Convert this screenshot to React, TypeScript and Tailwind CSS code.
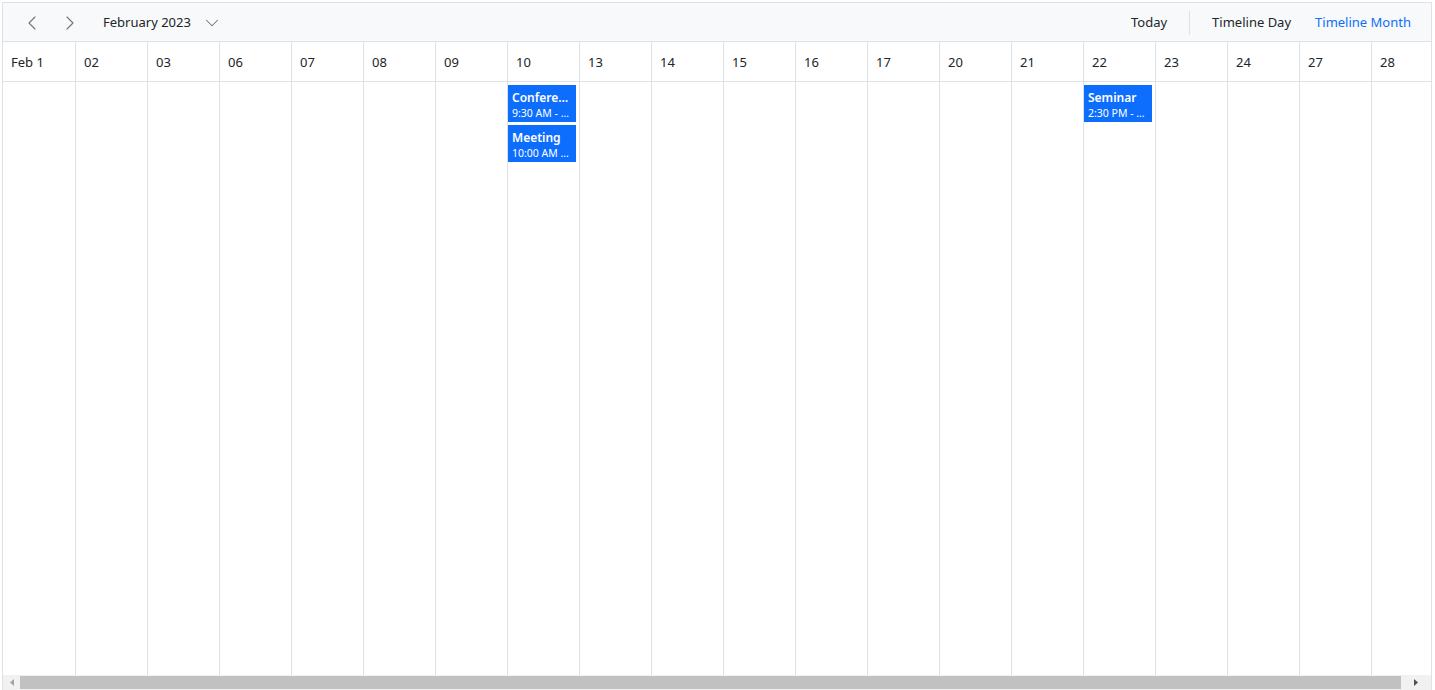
import { ChevronLeft, ChevronRight, ChevronDown } from "lucide-react";

const days = ["Feb 1", "02", "03", "06", "07", "08", "09", "10", "13", "14", "15", "16", "17", "20", "21", "22", "23", "24", "27", "28"];

const events: Record<string, { title: string; time: string }[]> = {
  "10": [
    { title: "Conference", time: "9:30 AM - 11:00 AM" },
    { title: "Meeting", time: "10:00 AM - 11:30 AM" },
  ],
  "22": [{ title: "Seminar", time: "2:30 PM - 4:00 PM" }],
};

export default function App() {
  return (
    <div className="h-[690px] pl-[2px] pt-[2px] bg-white overflow-hidden font-['Segoe_UI','Noto_Sans',sans-serif] text-[#212529]">
      <div className="w-[1430px] h-[689px] border border-[#dee2e6] flex flex-col overflow-hidden">
        {/* toolbar */}
        <div className="h-[39px] shrink-0 bg-[#f8f9fa] border-b border-[#dee2e6] flex items-center text-[13px] pt-[2px]">
          <button className="w-[38px] h-[38px] ml-[10px] flex items-center justify-center text-[#6c757d]">
            <ChevronLeft size={24} strokeWidth={1.1} />
          </button>
          <button className="w-[38px] h-[38px] flex items-center justify-center text-[#6c757d]">
            <ChevronRight size={24} strokeWidth={1.1} />
          </button>
          <div className="flex items-center ml-[14px] gap-[10px]">
            <span>February 2023</span>
            <ChevronDown size={22} strokeWidth={1.1} className="text-[#6c757d]" />
          </div>
          <div className="ml-auto flex items-center">
            <span className="pr-[22px]">Today</span>
            <div className="w-px h-[24px] bg-[#dee2e6]" />
            <span className="pl-[22px]">Timeline Day</span>
            <span className="pl-[24px] pr-[20px] text-[#0d6efd]">Timeline Month</span>
          </div>
        </div>

        {/* grid */}
        <div className="flex-1 flex overflow-hidden">
          {days.map((d, i) => (
            <div key={d} className={`${i === 0 ? "w-[73px]" : "w-[72px]"} shrink-0 border-r border-[#dee2e6] flex flex-col`}>
              <div className="h-[40px] shrink-0 border-b border-[#dee2e6] flex items-center pl-[8px] pt-[3px] text-[13px]">
                {d}
              </div>
              <div className="flex-1 flex flex-col gap-[3px] pt-[3px] pr-[3px]">
                {(events[d] || []).map((e) => (
                  <div key={e.title} className="h-[37px] bg-[#0d6efd] text-white px-[4px] pt-[5px] overflow-hidden">
                    <div className="text-[12px] font-semibold truncate leading-[15px]">{e.title}</div>
                    <div className="text-[10.5px] truncate leading-[16px]">{e.time}</div>
                  </div>
                ))}
              </div>
            </div>
          ))}
        </div>

        {/* horizontal scrollbar */}
        <div className="h-[15px] shrink-0 bg-[#f1f1f1] flex items-center">
          <div className="w-[17px] flex justify-center">
            <svg width="4" height="7" viewBox="0 0 4 7"><path d="M4 0 L0 3.5 L4 7 Z" fill="#a3a3a3" /></svg>
          </div>
          <div className="w-[1381px] h-[13px] bg-[#c1c1c1]" />
          <div className="flex-1 flex justify-center">
            <svg width="4" height="7" viewBox="0 0 4 7"><path d="M0 0 L4 3.5 L0 7 Z" fill="#505050" /></svg>
          </div>
        </div>
      </div>
    </div>
  );
}
